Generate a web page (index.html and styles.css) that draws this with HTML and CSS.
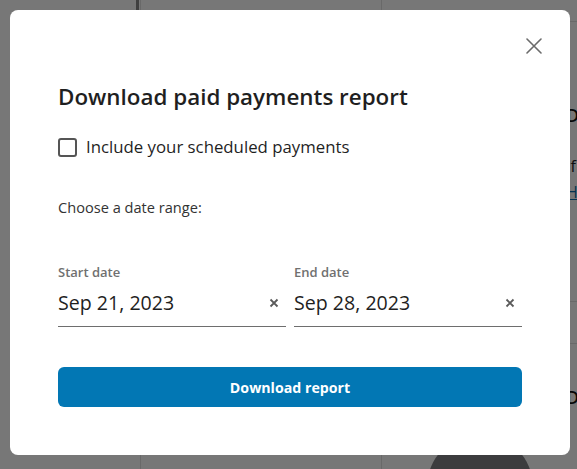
FILE: index.html
```html
<!DOCTYPE html>
<html lang="en">
<head>
<meta charset="utf-8">
<title>Download paid payments report</title>
<link rel="stylesheet" href="styles.css">
</head>
<body>
<div class="page">
  <aside class="sidebar"><div class="sidebar-bar"></div></aside>
  <main class="main"></main>
  <section class="panel">
    <div class="panel-head"></div>
    <div class="panel-body">
      <div class="panel-title">Document</div>
      <div class="panel-text">If you</div>
      <a class="panel-link" href="#">Help</a>
      <div class="panel-rule panel-rule-1"></div>
      <div class="panel-rule panel-rule-2"></div>
      <div class="panel-title panel-title-2">Due</div>
      <div class="fab"></div>
    </div>
  </section>
</div>
<div class="overlay"></div>
<div class="modal" role="dialog" aria-labelledby="modal-title">
  <button class="close" aria-label="Close">
    <svg viewBox="0 0 16 16" width="16" height="16"><path d="M1 1L15 15M15 1L1 15" stroke="#6b6b6b" stroke-width="1.6" fill="none" stroke-linecap="round"/></svg>
  </button>
  <h2 id="modal-title" class="title">Download paid payments report</h2>
  <label class="check">
    <span class="box"></span>
    <span class="check-label">Include your scheduled payments</span>
  </label>
  <p class="hint">Choose a date range:</p>
  <div class="fields">
    <div class="field">
      <div class="field-label">Start date</div>
      <div class="field-input">
        <span class="field-value">Sep 21, 2023</span>
        <svg class="clear" viewBox="0 0 10 10" width="10" height="10"><path d="M1.5 1.5L8.5 8.5M8.5 1.5L1.5 8.5" stroke="#5a5a5a" stroke-width="1.8" fill="none"/></svg>
      </div>
    </div>
    <div class="field">
      <div class="field-label">End date</div>
      <div class="field-input">
        <span class="field-value">Sep 28, 2023</span>
        <svg class="clear" viewBox="0 0 10 10" width="10" height="10"><path d="M1.5 1.5L8.5 8.5M8.5 1.5L1.5 8.5" stroke="#5a5a5a" stroke-width="1.8" fill="none"/></svg>
      </div>
    </div>
  </div>
  <button class="primary">Download report</button>
</div>
</body>
</html>
```
FILE: styles.css
```css
* { box-sizing: border-box; }
html, body { margin: 0; padding: 0; }
body {
  width: 577px;
  height: 469px;
  overflow: hidden;
  font-family: "Open Sans", "Noto Sans", sans-serif;
  background: #fff;
  position: relative;
}
.page {
  display: flex;
  height: 469px;
  overflow: hidden;
}
.sidebar {
  flex: 0 0 141px;
  border-right: 1px solid #e2e2e2;
}
.sidebar-bar {
  margin-left: 136px;
  width: 3px;
  height: 12px;
  background: #8a8a8a;
}
.main {
  flex: 0 0 241px;
  border-right: 1px solid #e2e2e2;
}
.panel {
  flex: 1 1 auto;
  min-width: 0;
  display: flex;
  flex-direction: column;
  overflow: hidden;
}
.panel-head {
  height: 22px;
  flex: 0 0 22px;
  border-bottom: 1px solid #e2e2e2;
}
.panel-body {
  flex: 1;
  padding-left: 184px;
  display: flex;
  flex-direction: column;
  position: relative;
  font-size: 16px;
  white-space: nowrap;
}
.panel-title { margin-top: 81px; font-weight: 600; font-size: 18px; color: #111; }
.panel-text { margin-top: 28px; color: #222; }
.panel-link { color: #0a6fb0; margin-top: 4px; }
.panel-rule { border-top: 1px solid #e2e2e2; }
.panel-rule-1 { margin-top: 98px; }
.panel-rule-2 { margin-top: 41px; }
.panel-title-2 { margin-top: 41px; }
.fab {
  position: absolute;
  left: 45px;
  top: 412px;
  width: 106px;
  height: 106px;
  border-radius: 50%;
  background: #828286;
}
.overlay {
  position: fixed;
  inset: 0;
  background: rgba(0, 0, 0, 0.532);
}
.modal {
  position: fixed;
  left: 10px;
  top: 10px;
  width: 560px;
  height: 445px;
  background: #fff;
  border-radius: 8px;
  padding: 72px 48px 0;
  display: flex;
  flex-direction: column;
  color: #1f1f1f;
}
.close {
  position: absolute;
  top: 28px;
  right: 28px;
  width: 16px;
  height: 16px;
  padding: 0;
  border: 0;
  background: none;
  display: flex;
}
.title {
  margin: 0;
  font-size: 22.4px;
  font-weight: 600;
  line-height: 30px;
  color: #1f1f1f;
}
.check {
  display: flex;
  align-items: center;
  gap: 9px;
  margin-top: 24px;
}
.box {
  width: 19px;
  height: 19px;
  border: 2px solid #555;
  border-radius: 3px;
}
.check-label {
  font-size: 16.8px;
  line-height: 22px;
  color: #1f1f1f;
}
.hint {
  margin: 39px 0 0;
  font-size: 14.6px;
  line-height: 20px;
  color: #333;
}
.fields {
  display: flex;
  gap: 8px;
  margin-top: 46px;
}
.field { flex: 1; }
.field-label {
  font-size: 13px;
  font-weight: 600;
  color: #707070;
  line-height: 18px;
  margin-bottom: 3px;
}
.field-input {
  display: flex;
  align-items: center;
  justify-content: space-between;
  height: 43px;
  padding-bottom: 5px;
  border-bottom: 1px solid #6e6e6e;
  padding-right: 7px;
}
.field-value {
  font-size: 19.6px;
  line-height: 26px;
  color: #1f1f1f;
}
.primary {
  margin-top: 40px;
  height: 40px;
  border: 0;
  border-radius: 6px;
  background: #0277b4;
  color: #fff;
  font-family: inherit;
  font-size: 14.2px;
  font-weight: 700;
}
```
